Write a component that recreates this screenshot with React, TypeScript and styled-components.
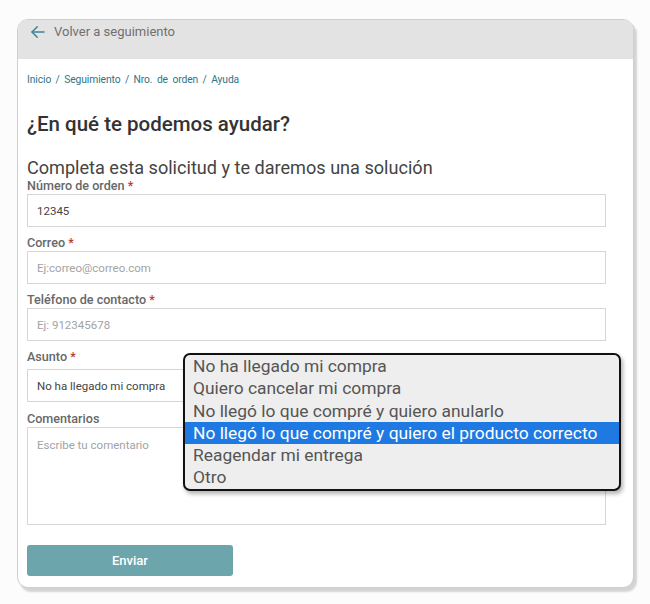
import React from "react";
import styled, { createGlobalStyle } from "styled-components";

const GlobalStyle = createGlobalStyle`
  html, body {
    margin: 0;
    padding: 0;
    background: #fcfcfc;
    font-family: Roboto, "Noto Sans", Arial, sans-serif;
  }
  * { box-sizing: border-box; }
`;

const Page = styled.div`
  width: 650px;
  height: 604px;
  padding: 19px 0 0 17px;
`;

const Card = styled.div`
  position: relative;
  width: 617px;
  background: #fff;
  border: 1px solid #cfcfcf;
  border-radius: 11px;
  box-shadow: 3px 4px 2px rgba(0, 0, 0, 0.16);
`;

const Header = styled.div`
  height: 39px;
  background: #e3e3e3;
  border-radius: 10px 10px 0 0;
  display: flex;
  align-items: flex-start;
  gap: 7px;
  padding: 3px 0 0 11px;
  color: #707070;
  font-size: 13px;
  line-height: 18px;
`;

const BackArrow = styled.svg`
  width: 18px;
  height: 18px;
  flex: none;
`;

const Body = styled.div`
  padding: 15px 27px 11px 9px;
  display: flex;
  flex-direction: column;
`;

const Breadcrumb = styled.nav`
  font-size: 10.3px;
  line-height: 12px;
  color: #2f7586;
  letter-spacing: -0.1px;
  word-spacing: 2px;
`;

const Title = styled.h1`
  margin: 26px 0 0;
  font-size: 20.5px;
  line-height: 24px;
  font-weight: 500;
  color: #333;
`;

const Subtitle = styled.h2`
  margin: 21px 0 0;
  font-size: 18.1px;
  line-height: 22px;
  font-weight: 400;
  color: #444;
`;

const Field = styled.div<{ $gap?: number; $top?: number }>`
  display: flex;
  flex-direction: column;
  gap: ${(p) => p.$gap ?? 1}px;
  margin-top: ${(p) => p.$top ?? 9}px;
`;

const Label = styled.label`
  font-size: 12.6px;
  line-height: 14px;
  font-weight: 500;
  color: #686868;
`;

const Req = styled.span`
  color: #c0392b;
`;

const Input = styled.div<{ $placeholder?: boolean }>`
  height: 33px;
  border: 1px solid #d6d6d6;
  display: flex;
  align-items: center;
  padding-left: 9px;
  font-size: 11.5px;
  color: ${(p) => (p.$placeholder ? "#a3a3a3" : "#444")};
`;

const TextArea = styled.div`
  height: 98px;
  border: 1px solid #d6d6d6;
  padding: 10px 9px;
  font-size: 11.5px;
  color: #a3a3a3;
`;

const SubmitButton = styled.button`
  margin-top: 20px;
  width: 206px;
  height: 31px;
  border: none;
  border-radius: 3px;
  background: #6da5ad;
  color: #fff;
  font-family: Roboto, Arial, sans-serif;
  font-size: 13px;
  font-weight: 500;
`;

const Listbox = styled.ul`
  position: absolute;
  left: 165px;
  top: 333px;
  width: 438px;
  margin: 0;
  padding: 0;
  list-style: none;
  background: #eeeeee;
  border: 2px solid #111;
  border-radius: 7px;
  box-shadow: 2px 3px 4px rgba(0, 0, 0, 0.3);
  overflow: hidden;
`;

const Option = styled.li<{ $active?: boolean }>`
  height: 22.3px;
  line-height: 22.3px;
  padding-left: 8px;
  font-size: 17.4px;
  white-space: nowrap;
  color: ${(p) => (p.$active ? "#fff" : "#555")};
  background: ${(p) => (p.$active ? "#1e7ae2" : "transparent")};
`;

const subjects = [
  "No ha llegado mi compra",
  "Quiero cancelar mi compra",
  "No llegó lo que compré y quiero anularlo",
  "No llegó lo que compré y quiero el producto correcto",
  "Reagendar mi entrega",
  "Otro",
];

export default function App() {
  return (
    <>
      <GlobalStyle />
      <Page>
        <Card>
          <Header>
            <BackArrow viewBox="0 0 24 24" fill="none" stroke="#3b8597" strokeWidth="2" strokeLinecap="round" strokeLinejoin="round">
              <path d="M20 12H4" />
              <path d="M11 19l-7-7 7-7" />
            </BackArrow>
            <span>Volver a seguimiento</span>
          </Header>
          <Body>
            <Breadcrumb>Inicio / Seguimiento / Nro. de orden / Ayuda</Breadcrumb>
            <Title>¿En qué te podemos ayudar?</Title>
            <Subtitle>Completa esta solicitud y te daremos una solución</Subtitle>
            <Field $top={0}>
              <Label>
                Número de orden <Req>*</Req>
              </Label>
              <Input>12345</Input>
            </Field>
            <Field>
              <Label>
                Correo <Req>*</Req>
              </Label>
              <Input $placeholder>Ej:correo@correo.com</Input>
            </Field>
            <Field>
              <Label>
                Teléfono de contacto <Req>*</Req>
              </Label>
              <Input $placeholder>Ej: 912345678</Input>
            </Field>
            <Field $gap={5}>
              <Label>
                Asunto <Req>*</Req>
              </Label>
              <Input>No ha llegado mi compra</Input>
            </Field>
            <Field $gap={1} $top={10}>
              <Label>Comentarios</Label>
              <TextArea>Escribe tu comentario</TextArea>
            </Field>
            <SubmitButton>Enviar</SubmitButton>
          </Body>
          <Listbox>
            {subjects.map((s, i) => (
              <Option key={s} $active={i === 3}>
                {s}
              </Option>
            ))}
          </Listbox>
        </Card>
      </Page>
    </>
  );
}
